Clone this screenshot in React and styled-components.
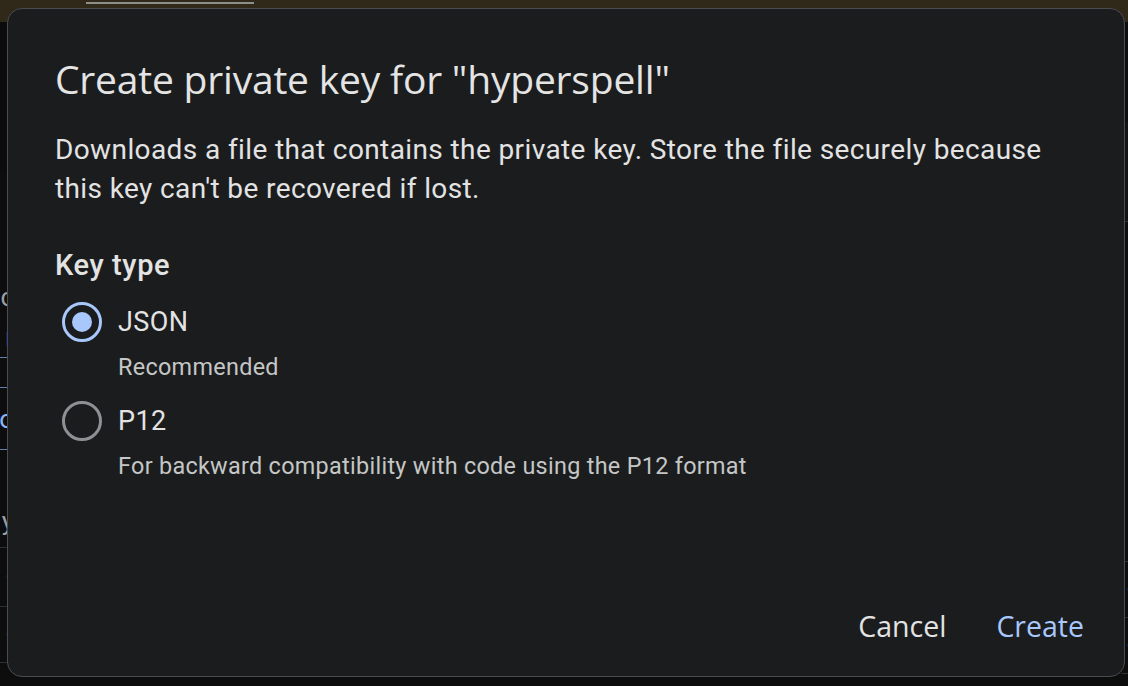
import React from "react";
import styled, { createGlobalStyle } from "styled-components";

const Global = createGlobalStyle`
  html, body { margin: 0; padding: 0; background: #0d0d0e; }
  body { width: 1128px; height: 686px; overflow: hidden; font-family: Roboto, "Noto Sans", sans-serif; }
  * { box-sizing: border-box; }
`;

const Page = styled.div`
  width: 1128px;
  height: 686px;
  display: flex;
  flex-direction: column;
  background: #0d0d0e;
  position: relative;
  overflow: hidden;
`;

const TopBar = styled.div`
  height: 22px;
  flex: none;
  background: #302818;
  padding: 2px 0 0 86px;
`;

const TabLine = styled.div`
  width: 168px;
  height: 2px;
  background: #8f8f8a;
`;

const Backdrop = styled.div`
  flex: 1;
  display: flex;
  justify-content: space-between;
`;

const SideStrip = styled.div`
  width: 7px;
  overflow: hidden;
  display: flex;
  flex-direction: column;
  align-items: flex-end;
`;

const SideRow = styled.div`
  height: ${(p) => p.$h}px;
  width: 40px;
  flex: none;
  display: flex;
  align-items: center;
  justify-content: flex-end;
  font-size: 26px;
  line-height: 1;
  color: ${(p) => p.$color || "#9aa0a6"};
  background: ${(p) => p.$bg || "transparent"};
  border-bottom: ${(p) => (p.$line ? `1.5px solid ${p.$line}` : "none")};
  margin-right: -7px;
`;

const Dialog = styled.div`
  position: absolute;
  left: 7px;
  top: 8px;
  width: 1118px;
  height: 669px;
  background: #1b1c1e;
  border: 1.5px solid #4a4c50;
  border-radius: 15px;
  padding: 0 40px 0 47px;
  display: flex;
  flex-direction: column;
`;

const Title = styled.h1`
  margin: 46px 0 0;
  font-family: "Open Sans", "Noto Sans", sans-serif;
  font-weight: 400;
  font-size: 39px;
  line-height: 48px;
  color: #e4e4e4;
  letter-spacing: -0.2px;
  white-space: nowrap;
`;

const Desc = styled.p`
  margin: 27px 0 0;
  font-size: 28px;
  line-height: 39px;
  color: #e3e3e3;
  letter-spacing: 0.39px;
  white-space: nowrap;
`;

const SectionLabel = styled.div`
  margin-top: 40px;
  font-size: 29px;
  line-height: 34px;
  color: #e3e3e3;
  font-weight: 500;
  letter-spacing: 0.6px;
`;

const Options = styled.div`
  margin-top: 20px;
  display: flex;
  flex-direction: column;
  gap: 19px;
`;

const Option = styled.label`
  display: grid;
  grid-template-columns: 63px 1fr;
  grid-template-rows: 40px auto;
  align-items: center;
  cursor: pointer;
`;

const Ring = styled.span`
  width: 40px;
  height: 40px;
  margin-left: 7px;
  border-radius: 50%;
  border: 3.5px solid ${(p) => (p.$on ? "#a8c7fa" : "#8e9194")};
  display: flex;
  align-items: center;
  justify-content: center;
  &::after {
    content: "";
    width: 20px;
    height: 20px;
    border-radius: 50%;
    background: ${(p) => (p.$on ? "#a8c7fa" : "transparent")};
  }
`;

const OptionName = styled.span`
  font-size: 27px;
  line-height: 40px;
  color: #e3e3e3;
  letter-spacing: 0.4px;
`;

const OptionHint = styled.span`
  grid-column: 2;
  font-size: 23.4px;
  line-height: 30px;
  margin-top: 10px;
  color: #c4c7c5;
  letter-spacing: 0.3px;
  white-space: nowrap;
`;

const Actions = styled.div`
  margin-top: auto;
  margin-bottom: 32px;
  display: flex;
  justify-content: flex-end;
  gap: 50px;
`;

const TextButton = styled.button`
  background: none;
  border: none;
  padding: 0;
  font-family: "Open Sans", "Noto Sans", sans-serif;
  font-size: 28.5px;
  font-weight: 500;
  line-height: 36px;
  color: ${(p) => (p.$primary ? "#a8c7fa" : "#e3e3e3")};
  cursor: pointer;
`;

export default function App() {
  return (
    <Page>
      <Global />
      <TopBar>
        <TabLine />
      </TopBar>
      <Backdrop>
        <SideStrip>
          <SideRow $h={150} $bg="#0b0b0c" />
          <SideRow $h={105} />
          <SideRow $h={40}>c</SideRow>
          <SideRow $h={41} $color="#8ab4f8" $line="#5f7fb0">r</SideRow>
          <SideRow $h={30} $line="#5f7fb0" />
          <SideRow $h={62} $color="#8ab4f8" $line="#5f7fb0">o</SideRow>
          <SideRow $h={45} />
          <SideRow $h={53} $line="#2e2f31">y</SideRow>
          <SideRow $h={59} $line="#2e2f31">•</SideRow>
          <SideRow $h={56} $line="#2e2f31">•</SideRow>
        </SideStrip>
        <SideStrip>
          <SideRow $h={100} />
          <SideRow $h={100} $bg="#131314" $line="#2e2f31" />
          <SideRow $h={340} $line="#2e2f31" />
          <SideRow $h={56} $line="#2e2f31">•</SideRow>
          <SideRow $h={56} $line="#2e2f31">•</SideRow>
        </SideStrip>
      </Backdrop>
      <Dialog role="dialog">
        <Title>Create private key for "hyperspell"</Title>
        <Desc>
          Downloads a file that contains the private key. Store the file securely because
          <br />
          this key can't be recovered if lost.
        </Desc>
        <SectionLabel>Key type</SectionLabel>
        <Options>
          <Option>
            <Ring $on />
            <OptionName>JSON</OptionName>
            <OptionHint>Recommended</OptionHint>
          </Option>
          <Option>
            <Ring />
            <OptionName>P12</OptionName>
            <OptionHint>For backward compatibility with code using the P12 format</OptionHint>
          </Option>
        </Options>
        <Actions>
          <TextButton>Cancel</TextButton>
          <TextButton $primary>Create</TextButton>
        </Actions>
      </Dialog>
    </Page>
  );
}
